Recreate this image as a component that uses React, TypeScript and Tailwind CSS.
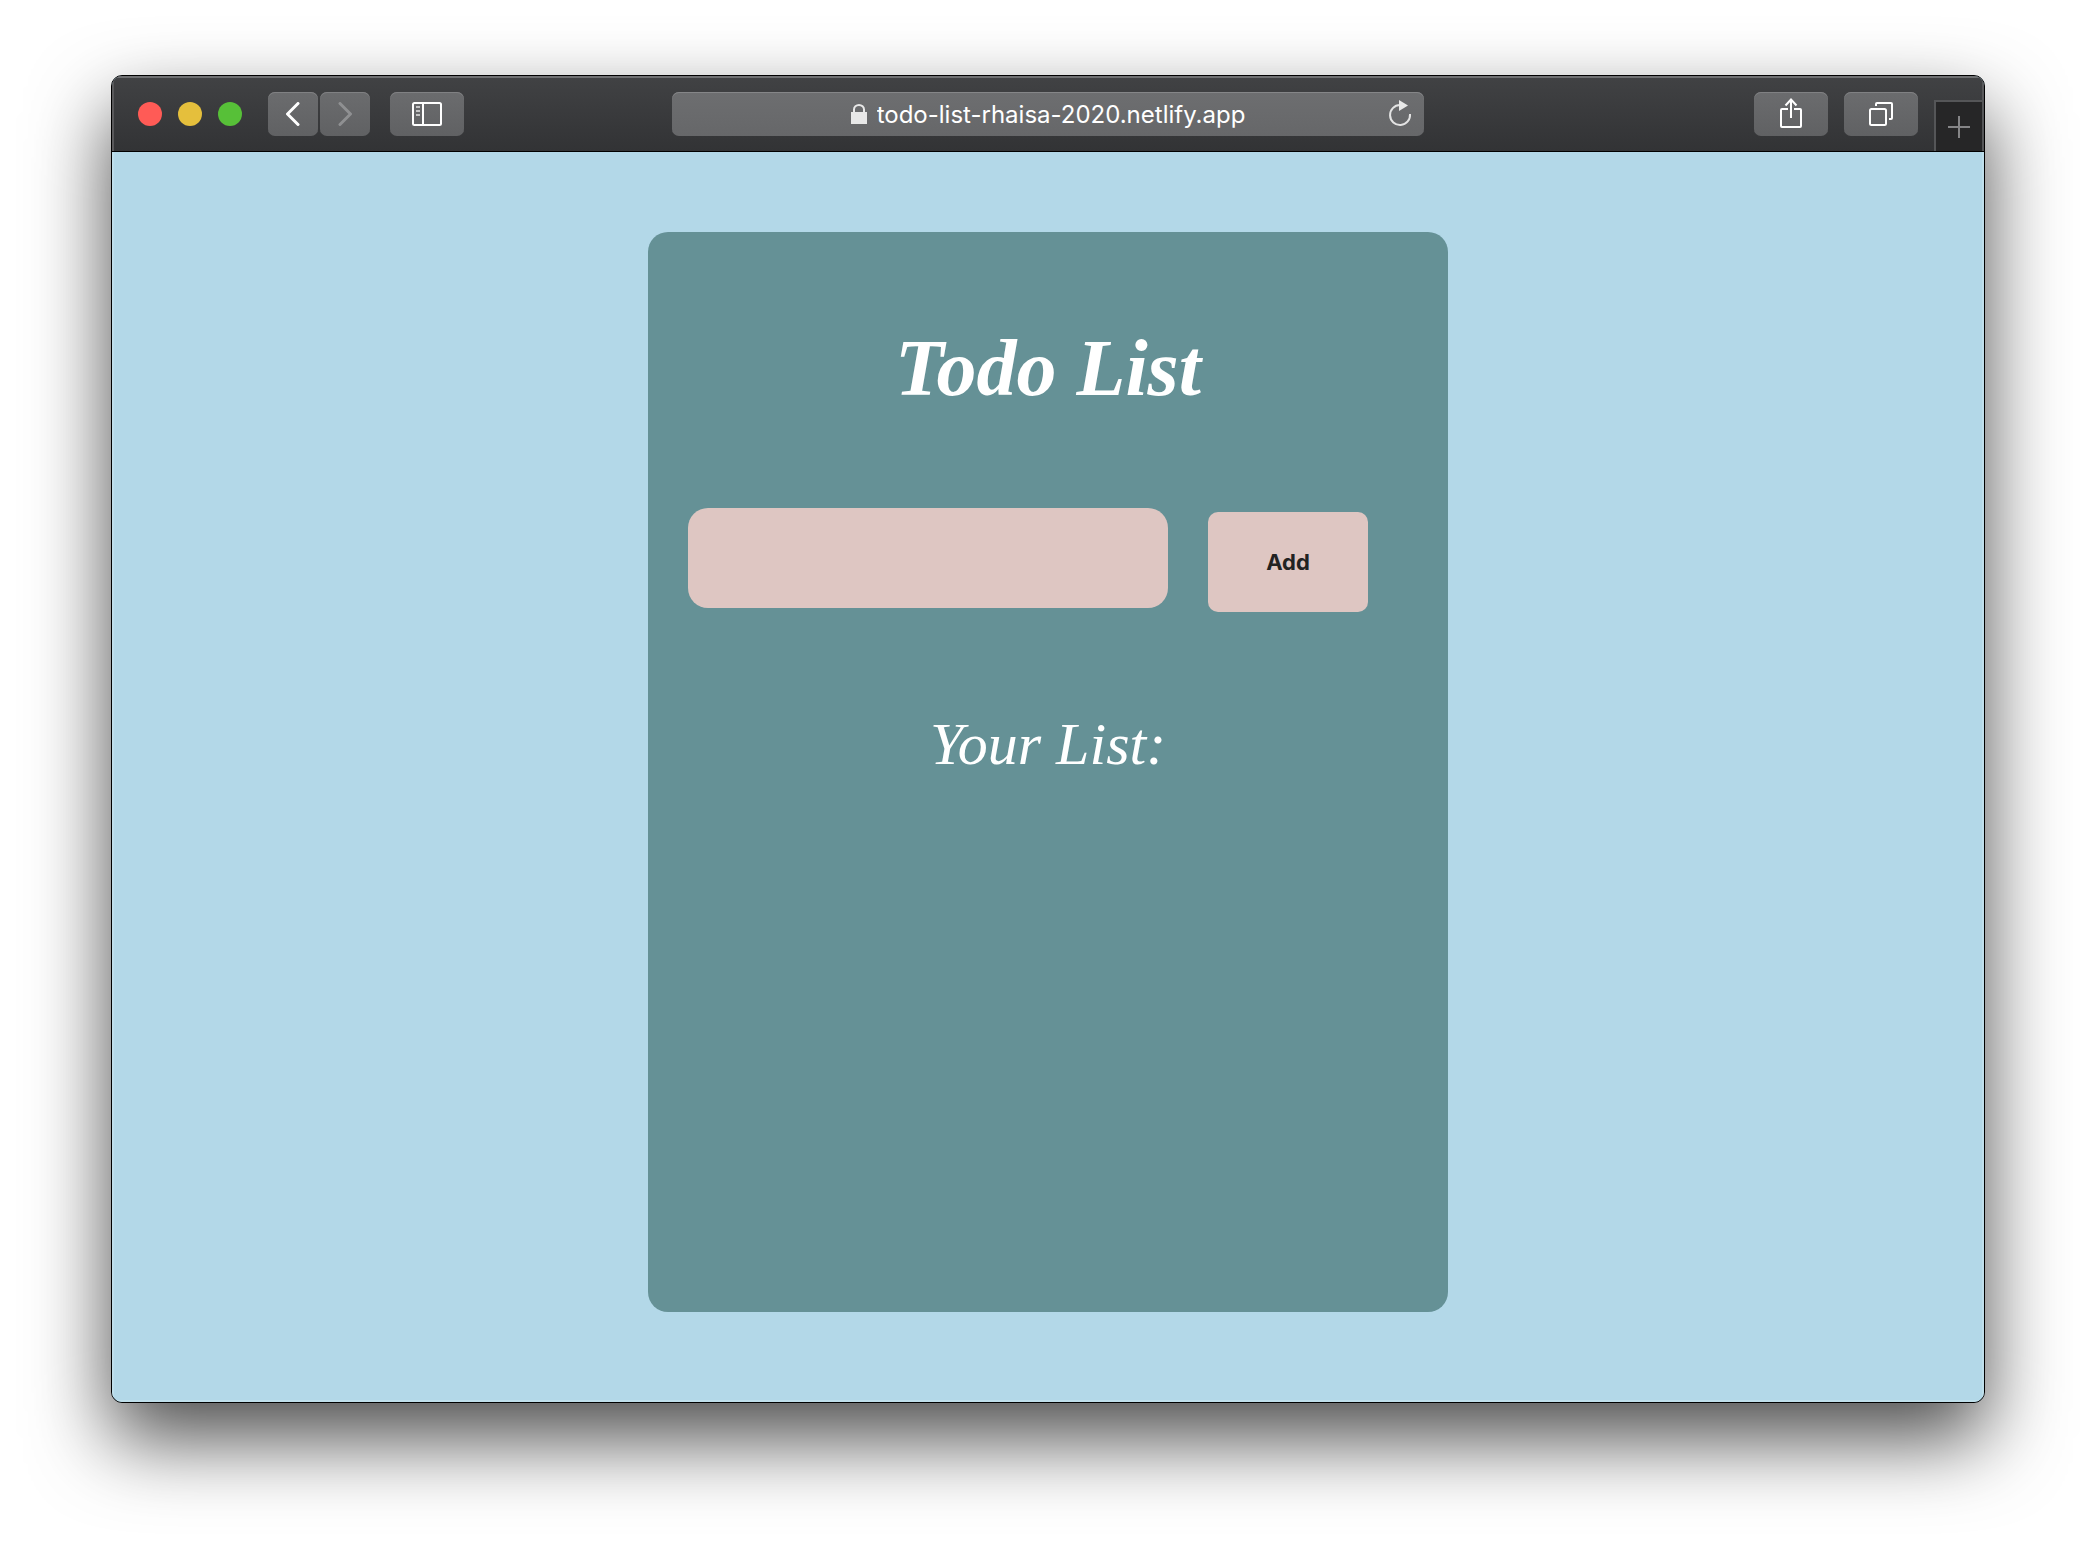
import { useState } from "react";
import type { FormEvent, ReactNode } from "react";

function ToolButton({ label, width, children }: { label: string; width: string; children: ReactNode }) {
  return (
    <button
      type="button"
      aria-label={label}
      className={`flex h-11 ${width} shrink-0 items-center justify-center rounded-[7px] bg-linear-to-b from-[#6b6c6e] to-[#606163] text-white shadow-[inset_0_1px_0_#808183]`}
    >
      {children}
    </button>
  );
}

function Toolbar() {
  return (
    <header className="flex h-[76px] items-start border-b border-black bg-linear-to-b from-[#414244] to-[#323335] shadow-[inset_0_2px_0_#6f7072,inset_2px_0_0_#59595b,inset_-2px_0_0_#59595b]">
      <div className="flex flex-1 items-center pt-4">
        <div className="ml-[26px] flex gap-4">
          <button type="button" aria-label="Close" className="size-6 rounded-full bg-[#ff5b56]" />
          <button type="button" aria-label="Minimize" className="size-6 rounded-full bg-[#e5bf3c]" />
          <button type="button" aria-label="Zoom" className="size-6 rounded-full bg-[#57c038]" />
        </div>
        <div className="ml-[26px] flex gap-0.5">
          <ToolButton label="Back" width="w-[50px]">
            <svg className="h-6 w-4" viewBox="0 0 16 24" fill="none" stroke="currentColor" strokeWidth="3" strokeLinecap="round" strokeLinejoin="round">
              <path d="M13 1.500 2.500 12 13 22.500" />
            </svg>
          </ToolButton>
          <ToolButton label="Forward" width="w-[50px]">
            <svg className="h-6 w-4 text-[#8f9092]" viewBox="0 0 16 24" fill="none" stroke="currentColor" strokeWidth="3" strokeLinecap="round" strokeLinejoin="round">
              <path d="M3 1.500 13.500 12 3 22.500" />
            </svg>
          </ToolButton>
        </div>
        <div className="ml-5">
          <ToolButton label="Show sidebar" width="w-[74px]">
            <svg className="h-6 w-[30px]" viewBox="0 0 30 24" fill="none" stroke="currentColor" strokeWidth="2">
              <rect x="1" y="1" width="28" height="22" rx="1.500" />
              <path d="M11 1v22" />
              <path d="M4 5h4M4 9h4M4 13h4" stroke="#c4c4c5" />
            </svg>
          </ToolButton>
        </div>
      </div>
      <div className="mt-4 flex h-11 w-[752px] items-center rounded-[7px] bg-linear-to-b from-[#6d6e70] to-[#666769] px-3 text-white shadow-[inset_0_1px_0_#858688]">
        <span className="w-6" />
        <div className="flex flex-1 items-center justify-center gap-2.5">
          <svg className="h-5 w-4 shrink-0" viewBox="0 0 16 20" fill="none">
            <path d="M3 9V5.500a5 4.500 0 0 1 10 0V9" stroke="#e8e8e8" strokeWidth="2" />
            <path d="M0 8h16v12H0z" fill="#e8e8e8" />
          </svg>
          <input
            aria-label="Address"
            type="text"
            defaultValue="todo-list-rhaisa-2020.netlify.app"
            className="field-sizing-content bg-transparent pt-0.5 font-[Inter,sans-serif] text-[24px] leading-8 outline-none"
          />
        </div>
        <button type="button" aria-label="Reload" className="flex w-6 justify-center">
          <svg className="h-7 w-6" viewBox="0 0 24 28" fill="none">
            <path d="M12 5a10 10 0 1 0 10 9" stroke="#e3e3e3" strokeWidth="2" />
            <path d="M11 0v11l9-5.500z" fill="#e8e8e8" />
          </svg>
        </button>
      </div>
      <div className="flex flex-1 justify-end">
        <div className="flex gap-4 pt-4">
          <ToolButton label="Share" width="w-[74px]">
            <svg className="h-8 w-6" viewBox="0 0 24 32" fill="none" stroke="currentColor" strokeWidth="2">
              <path d="M9 11H3q-1 0-1 1v16q0 1 1 1h18q1 0 1-1V12q0-1-1-1h-6" />
              <path d="M12 20V1.500M6.500 7.500 12 1.500l5.500 6" />
            </svg>
          </ToolButton>
          <ToolButton label="Show all tabs" width="w-[74px]">
            <svg className="size-6" viewBox="0 0 24 24" fill="none" stroke="currentColor" strokeWidth="2">
              <rect x="1" y="7" width="16" height="16" rx="1.500" />
              <path d="M7 4V2q0-1 1-1h14q1 0 1 1v14q0 1-1 1h-2" />
            </svg>
          </ToolButton>
        </div>
        <button type="button" aria-label="New tab" className="mt-6 ml-4 flex h-[51px] w-[50px] items-center justify-center border-t-2 border-r-2 border-l-2 border-[#555658] bg-[#262627] text-[#858587]">
          <svg className="size-[22px]" viewBox="0 0 22 22" fill="none" stroke="currentColor" strokeWidth="2">
            <path d="M11 0v22M0 11h22" />
          </svg>
        </button>
      </div>
    </header>
  );
}

function TodoCard() {
  const [items, setItems] = useState<string[]>([]);
  const [draft, setDraft] = useState("");

  function addItem(event: FormEvent) {
    event.preventDefault();
    if (!draft.trim()) return;
    setItems([...items, draft.trim()]);
    setDraft("");
  }

  return (
    <section className="min-h-[1080px] w-full max-w-[800px] rounded-[20px] bg-[#659196] px-10 pt-[90px] text-white">
      <h1 className="text-center font-['Liberation_Serif',serif] text-[80px] leading-[92px] font-bold italic">Todo List</h1>
      <form onSubmit={addItem} className="mt-[94px] flex items-start gap-10">
        <input
          aria-label="New task"
          type="text"
          value={draft}
          onChange={(event) => setDraft(event.target.value)}
          className="h-25 w-[480px] min-w-0 rounded-[20px] bg-[#dec6c2] px-6 text-3xl text-[#222] outline-none"
        />
        <button type="submit" className="mt-1 h-25 w-40 shrink-0 rounded-[10px] bg-[#dec6c2] font-[Inter,sans-serif] text-[22px] font-bold text-[#222]">
          Add
        </button>
      </form>
      <h2 className="mt-[98px] text-center font-['Liberation_Serif',serif] text-[60px] leading-[68px] italic">Your List:</h2>
      <ul className="mt-8 space-y-4 font-['Liberation_Serif',serif] text-4xl">
        {items.map((item, index) => (
          <li key={index}>{item}</li>
        ))}
      </ul>
    </section>
  );
}

export default function App() {
  return (
    <div className="bg-white px-[111px] pt-[75px] pb-[147px]">
      <div className="overflow-hidden rounded-[11px] border border-black bg-[#b3d8e8] shadow-[0_36px_80px_rgba(0,0,0,0.7)]">
        <Toolbar />
        <main className="flex justify-center pt-20 pb-[90px] shadow-[inset_2px_0_0_#bfdfeb,inset_-2px_0_0_#bfdfeb,inset_0_-2px_0_#bfdfeb]">
          <TodoCard />
        </main>
      </div>
    </div>
  );
}
